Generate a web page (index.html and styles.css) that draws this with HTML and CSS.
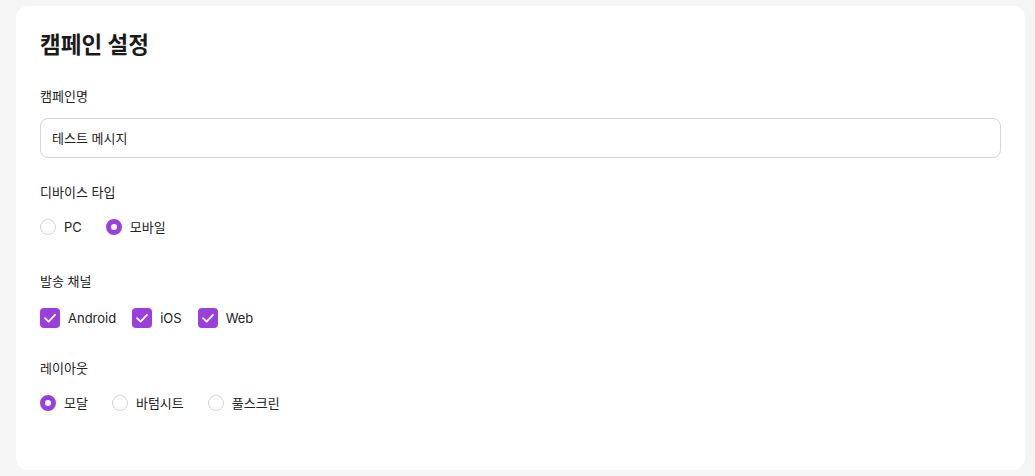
FILE: index.html
```html
<!DOCTYPE html>
<html lang="ko">
<head>
<meta charset="utf-8">
<link rel="stylesheet" href="styles.css">
</head>
<body>
<div class="card">
  <h1 class="title">캠페인 설정</h1>

  <div class="field field-name">
    <div class="label">캠페인명</div>
    <div class="input">테스트 메시지</div>
  </div>

  <div class="field field-device">
    <div class="label">디바이스 타입</div>
    <div class="options radios">
      <div class="opt"><span class="radio"></span><span>PC</span></div>
      <div class="opt"><span class="radio on"></span><span>모바일</span></div>
    </div>
  </div>

  <div class="field field-channel">
    <div class="label">발송 채널</div>
    <div class="options checks">
      <div class="opt"><span class="check"><svg viewBox="0 0 20 20" width="20" height="20"><path d="M5 10.2 L8.6 13.6 L15 6.8" fill="none" stroke="#fff" stroke-width="1.8" stroke-linecap="round" stroke-linejoin="round"/></svg></span><span>Android</span></div>
      <div class="opt"><span class="check"><svg viewBox="0 0 20 20" width="20" height="20"><path d="M5 10.2 L8.6 13.6 L15 6.8" fill="none" stroke="#fff" stroke-width="1.8" stroke-linecap="round" stroke-linejoin="round"/></svg></span><span>iOS</span></div>
      <div class="opt"><span class="check"><svg viewBox="0 0 20 20" width="20" height="20"><path d="M5 10.2 L8.6 13.6 L15 6.8" fill="none" stroke="#fff" stroke-width="1.8" stroke-linecap="round" stroke-linejoin="round"/></svg></span><span>Web</span></div>
    </div>
  </div>

  <div class="field field-layout">
    <div class="label">레이아웃</div>
    <div class="options radios">
      <div class="opt"><span class="radio on"></span><span>모달</span></div>
      <div class="opt"><span class="radio"></span><span>바텀시트</span></div>
      <div class="opt"><span class="radio"></span><span>풀스크린</span></div>
    </div>
  </div>
</div>
</body>
</html>
```

FILE: styles.css
```css
* { box-sizing: border-box; }
html, body { margin: 0; padding: 0; }
body {
  background: #f5f5f5;
  font-family: "Inter", "Noto Sans CJK KR", sans-serif;
  color: #222;
  padding: 6px 10px 6px 16px;
}
.card {
  background: #fff;
  border-radius: 12px;
  padding: 24px 24px 57px 24px;
}
.title {
  margin: 0;
  font-size: 22.5px;
  line-height: 30px;
  font-weight: 700;
  color: #1a1a1a;
}
.label {
  font-size: 13px;
  line-height: 20px;
  color: #222;
}
.field-name { margin-top: 26px; }
.field-device { margin-top: 24px; }
.field-channel { margin-top: 34px; }
.field-layout { margin-top: 30px; }
.input {
  margin-top: 12px;
  height: 40px;
  border: 1px solid #d6d6d6;
  border-radius: 8px;
  padding: 0 11px;
  font-size: 13px;
  line-height: 38px;
  color: #222;
}
.options { display: flex; align-items: center; }
.radios { gap: 24px; margin-top: 15px; }
.checks { gap: 16px; margin-top: 17px; }
.opt {
  display: flex;
  align-items: center;
  gap: 8px;
  font-size: 13px;
  line-height: 20px;
  height: 20px;
}
.radio {
  width: 16px;
  height: 16px;
  border-radius: 50%;
  border: 1px solid #d4d4d4;
  background: #fff;
  flex: none;
}
.radio.on {
  border: 5px solid #9a3fdc;
}
.check {
  width: 20px;
  height: 20px;
  border-radius: 4px;
  background: #9a3fdc;
  flex: none;
  display: block;
}
.check svg { display: block; }
```
